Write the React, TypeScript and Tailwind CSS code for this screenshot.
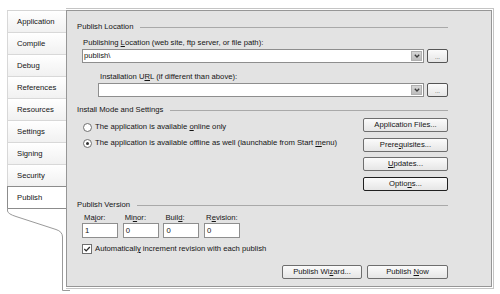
import React from "react";

const U = ({ children }: { children: React.ReactNode }) => (
  <span className="underline decoration-[0.7px] underline-offset-[1px]">{children}</span>
);

function Header({ children }: { children: React.ReactNode }) {
  return (
    <div className="flex items-center h-[10px] gap-[7px]">
      <span className="whitespace-nowrap">{children}</span>
      <div className="flex-1 h-px bg-[#a9a9a9]" />
    </div>
  );
}

function Btn({ children, def }: { children: React.ReactNode; def?: boolean }) {
  return (
    <div
      className={
        "h-[14px] flex items-center justify-center rounded-[2px] bg-linear-to-b from-[#fbfbfb] to-[#e6e6e6] whitespace-nowrap " +
        (def ? "border-[1.5px] border-[#202020]" : "border border-[#6e6e6e]")
      }
    >
      <span>{children}</span>
    </div>
  );
}

function Dots() {
  return (
    <div className="w-[21px] h-[14px] shrink-0 flex items-center justify-center rounded-[2px] border border-[#555555] bg-linear-to-b from-[#fbfbfb] to-[#e6e6e6] text-[6px] leading-[6px] pt-[2px] text-[#333]">
      ...
    </div>
  );
}

function Combo({ value }: { value?: string }) {
  return (
    <div className="flex-1 h-[14px] flex items-center border border-[#8e8e8e] bg-white">
      <span className="flex-1 pl-[1px]">{value}</span>
      <div className="w-[11px] h-[10px] mr-px flex items-center justify-center bg-linear-to-b from-[#d6d6d6] to-[#bdbdbd] border border-[#b0b0b0]">
        <svg width="6" height="4" viewBox="0 0 6 4">
          <path d="M0.8 0.8 L3 3 L5.2 0.8" fill="none" stroke="#3a3a3a" strokeWidth="1.3" />
        </svg>
      </div>
    </div>
  );
}

function Radio({ checked }: { checked?: boolean }) {
  return (
    <div className="w-[9px] h-[9px] rounded-full border border-[#6f6f6f] bg-white flex items-center justify-center shrink-0">
      {checked && <div className="w-[3px] h-[3px] rounded-full bg-[#333]" />}
    </div>
  );
}

const tabs = ["Application", "Compile", "Debug", "References", "Resources", "Settings", "Signing", "Security"];

function VerField({ label, value }: { label: React.ReactNode; value: string }) {
  return (
    <div className="w-[36px] flex flex-col">
      <div className="h-[10px] pl-[2px] whitespace-nowrap">{label}</div>
      <div className="h-[15px] border border-[#8e8e8e] bg-white pl-[2px] flex items-center">{value}</div>
    </div>
  );
}

export default function App() {
  return (
    <div className="relative w-[500px] h-[294px] bg-white overflow-hidden text-[7.7px] leading-[10px] text-[#141414] font-['Liberation_Sans',Arial,sans-serif]">
      <div className="flex pl-[7px] pt-[8px]">
        {/* tab strip */}
        <div className="w-[59px] mt-[2px] flex flex-col border-t border-[#d4d4d4]">
          {tabs.map((t) => (
            <div
              key={t}
              className="h-[22px] flex items-center pl-[9px] border-b border-l border-[#d8d8d8] bg-linear-to-b from-[#ffffff] to-[#f1f1f1]"
            >
              {t}
            </div>
          ))}
          <div className="-mt-px h-[23px] flex items-center pl-[9px] border-t border-b border-l border-[#8c8c8c] bg-white">
            Publish
          </div>
        </div>

        {/* panel */}
        <div className="w-[428px] h-[281px] border-t border-r border-b border-[#c4c4c4] pt-px pr-px pb-px bg-white">
          <div className="h-full border border-[#969696] bg-[#e3e3e3] pl-[10px] pr-[43px] pt-[11px] flex flex-col">
            <Header>Publish Location</Header>
            <div className="mt-[6px] pl-[6px] h-[10px] whitespace-nowrap">
              Publishing <U>L</U>ocation (web site, ftp server, or file path):
            </div>
            <div className="mt-[1px] flex pl-[5px] gap-[3px]">
              <Combo value="publish\" />
              <Dots />
            </div>
            <div className="mt-[9px] pl-[23px] h-[10px] whitespace-nowrap">
              Installation U<U>R</U>L (if different than above):
            </div>
            <div className="mt-[1px] flex pl-[21px] gap-[3px]">
              <Combo />
              <Dots />
            </div>

            <div className="mt-[8px]">
              <Header>Install Mode and Settings</Header>
            </div>
            <div className="flex justify-between">
              <div className="pl-[6px] pt-[7px] flex flex-col gap-[6px]">
                <div className="h-[10px] flex items-center gap-[3px] whitespace-nowrap">
                  <Radio />
                  <span>
                    The application is available <U>o</U>nline only
                  </span>
                </div>
                <div className="h-[10px] flex items-center gap-[3px] whitespace-nowrap">
                  <Radio checked />
                  <span>
                    The application is available offline as well (launchable from Start <U>m</U>enu)
                  </span>
                </div>
              </div>
              <div className="w-[85px] pt-[3px] flex flex-col gap-[5.5px]">
                <Btn>Application Files...</Btn>
                <Btn>
                  Prere<U>q</U>uisites...
                </Btn>
                <Btn>
                  <U>U</U>pdates...
                </Btn>
                <Btn def>
                  Optio<U>n</U>s...
                </Btn>
              </div>
            </div>

            <div className="mt-[9.5px]">
              <Header>Publish Version</Header>
            </div>
            <div className="mt-[3px] flex pl-[5px] gap-[4.7px]">
              <VerField label={<>Ma<U>j</U>or:</>} value="1" />
              <VerField label={<>Mi<U>n</U>or:</>} value="0" />
              <VerField label={<>Buil<U>d</U>:</>} value="0" />
              <VerField label={<>R<U>e</U>vision:</>} value="0" />
            </div>
            <div className="mt-[6px] pl-[5px] h-[10px] flex items-center gap-[3px] whitespace-nowrap">
              <div className="w-[10px] h-[10px] border border-[#6f6f6f] bg-white flex items-center justify-center shrink-0">
                <svg width="8" height="8" viewBox="0 0 8 8">
                  <path d="M1.3 4 L3.2 5.9 L6.8 2" fill="none" stroke="#2a2a2a" strokeWidth="1.3" />
                </svg>
              </div>
              <span>
                Automaticall<U>y</U> increment revision with each publish
              </span>
            </div>
            <div className="mt-[11px] flex justify-end gap-[5px]">
              <div className="w-[80px]">
                <Btn>
                  Publish Wi<U>z</U>ard...
                </Btn>
              </div>
              <div className="w-[81px]">
                <Btn>
                  Publish <U>N</U>ow
                </Btn>
              </div>
            </div>
          </div>
        </div>
      </div>

      {/* page curl below the selected tab */}
      <svg className="absolute left-0 top-0 pointer-events-none" width="70" height="294" viewBox="0 0 70 294">
        <path
          d="M7.5 208 L7.5 211 Q8 214 16 216.5 L56 229.5 Q62.5 231.5 62.5 237 L62.5 290.5 L70 290.5"
          fill="none"
          stroke="#9a9a9a"
          strokeWidth="1"
        />
      </svg>
    </div>
  );
}
